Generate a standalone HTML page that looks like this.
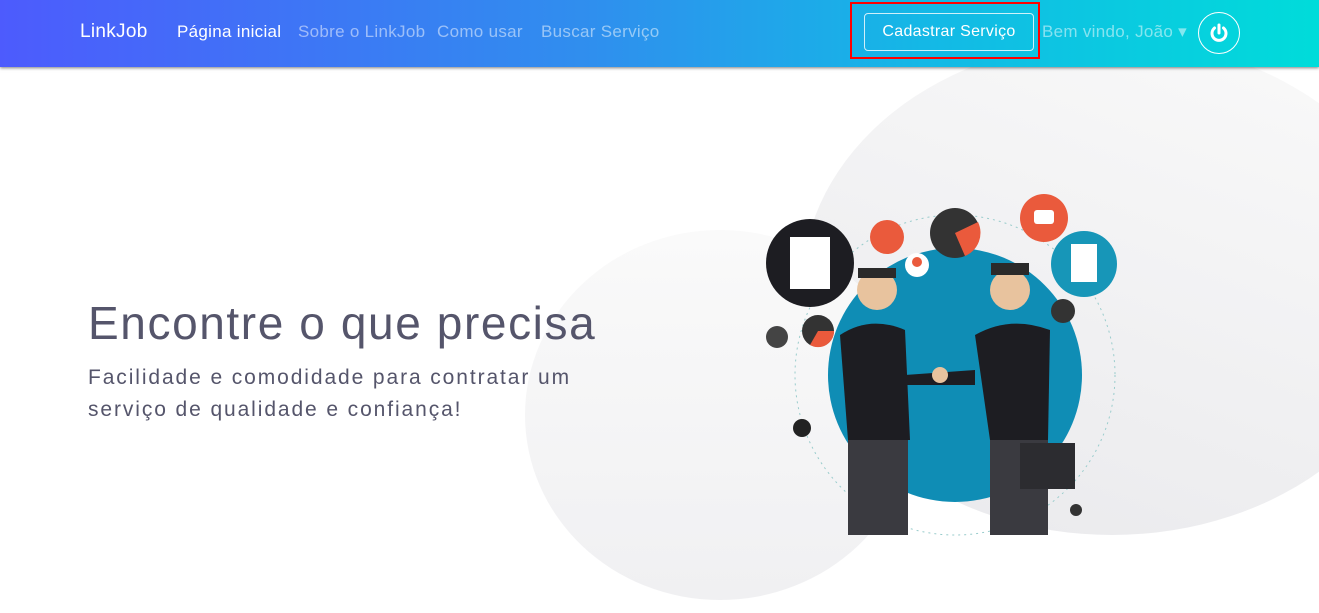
<!DOCTYPE html>
<html><head><meta charset="utf-8"><style>
*{margin:0;padding:0;box-sizing:border-box}
body{width:1319px;height:613px;overflow:hidden;background:#fff;font-family:"Liberation Sans",sans-serif;position:relative}
nav{position:absolute;left:0;top:0;width:1319px;height:67px;background:linear-gradient(90deg,#4d5bfd 0%,#2f8fee 45%,#14b8e6 70%,#00dcda 100%);box-shadow:0 1px 3px rgba(0,0,0,.5);z-index:5}
nav span{position:absolute;top:22px;font-size:17px;color:rgba(255,255,255,.5);letter-spacing:0.3px}
.blob1{position:absolute;left:802px;top:40px;width:620px;height:495px;border-radius:50%;background:linear-gradient(200deg,#fafafa,#e9e9ec)}
.blob2{position:absolute;left:525px;top:230px;width:390px;height:370px;border-radius:50%;background:linear-gradient(180deg,#fafafa,#f0f0f2)}
h1{position:absolute;left:88px;top:296px;font-size:46px;font-weight:normal;color:#55556b;letter-spacing:1.6px}
p{position:absolute;left:88px;top:362px;font-size:21px;line-height:32px;color:#55556b;letter-spacing:1.9px}
</style></head><body>
<nav>
<span style="left:80px;color:#fff;font-size:19px;top:21px">LinkJob</span>
<span style="left:177px;color:#fff">Página inicial</span>
<span style="left:298px">Sobre o LinkJob</span>
<span style="left:437px">Como usar</span>
<span style="left:541px">Buscar Serviço</span>
<div style="position:absolute;left:850px;top:2px;width:190px;height:57px;border:2px solid #f00"></div>
<div style="position:absolute;left:864px;top:13px;width:170px;height:38px;border:1px solid rgba(255,255,255,.8);border-radius:4px;color:#fff;font-size:16px;text-align:center;line-height:36px;letter-spacing:0.3px">Cadastrar Serviço</div>
<span style="left:1042px">Bem vindo, João ▾</span>
<div style="position:absolute;left:1198px;top:12px;width:42px;height:42px;border:1.5px solid #fff;border-radius:50%"><svg width="40" height="40" viewBox="0 0 40 40"><path d="M15.5 15a7 7 0 1 0 9 0" fill="none" stroke="#fff" stroke-width="3" stroke-linecap="round"/><path d="M20 12v8" stroke="#fff" stroke-width="3" stroke-linecap="round"/></svg></div>
</nav>
<div class="blob1"></div><div class="blob2"></div>
<h1>Encontre o que precisa</h1>
<p>Facilidade e comodidade para contratar um<br>serviço de qualidade e confiança!</p>
<svg style="position:absolute;left:760px;top:175px" width="370" height="370" viewBox="760 175 370 370">
<circle cx="955" cy="375" r="127" fill="#0f8db5"/>
<circle cx="955" cy="375" r="160" fill="none" stroke="#9cc" stroke-dasharray="2 4"/>
<circle cx="810" cy="263" r="44" fill="#1d1d22"/><rect x="790" y="237" width="40" height="52" fill="#fff"/>
<circle cx="1044" cy="218" r="24" fill="#ea5a3c"/><rect x="1034" y="210" width="20" height="14" rx="3" fill="#fff"/>
<circle cx="1084" cy="264" r="33" fill="#1796b8"/><rect x="1071" y="244" width="26" height="38" fill="#fff"/>
<circle cx="955" cy="233" r="25" fill="#333"/><path d="M955 233L978 222A25 25 0 0 1 965 256Z" fill="#ea5a3c"/>
<circle cx="887" cy="237" r="17" fill="#ea5a3c"/>
<circle cx="917" cy="265" r="12" fill="#fff"/><circle cx="917" cy="262" r="5" fill="#ea5a3c"/>
<circle cx="818" cy="331" r="16" fill="#333"/><path d="M818 331L834 331A16 16 0 0 1 810 345Z" fill="#ea5a3c"/>
<circle cx="1063" cy="311" r="12" fill="#333"/><circle cx="777" cy="337" r="11" fill="#444"/>
<circle cx="802" cy="428" r="9" fill="#222"/><circle cx="1076" cy="510" r="6" fill="#333"/>
<circle cx="877" cy="290" r="20" fill="#e8c39e"/><rect x="858" y="268" width="38" height="10" fill="#2a2a2a"/>
<path d="M840 335Q870 315 905 330L910 440L848 440Z" fill="#1d1d22"/>
<rect x="848" y="440" width="60" height="95" fill="#3a3a40"/>
<circle cx="1010" cy="290" r="20" fill="#e8c39e"/><rect x="991" y="263" width="38" height="12" fill="#2a2a2a"/>
<path d="M975 335Q1010 315 1050 330L1048 440L990 440Z" fill="#1d1d22"/>
<rect x="990" y="440" width="58" height="95" fill="#3a3a40"/>
<path d="M905 375L975 370L975 385L905 385Z" fill="#1d1d22"/><circle cx="940" cy="375" r="8" fill="#e8c39e"/>
<rect x="1020" y="443" width="55" height="46" fill="#2c2c30"/>
</svg>
</body></html>
